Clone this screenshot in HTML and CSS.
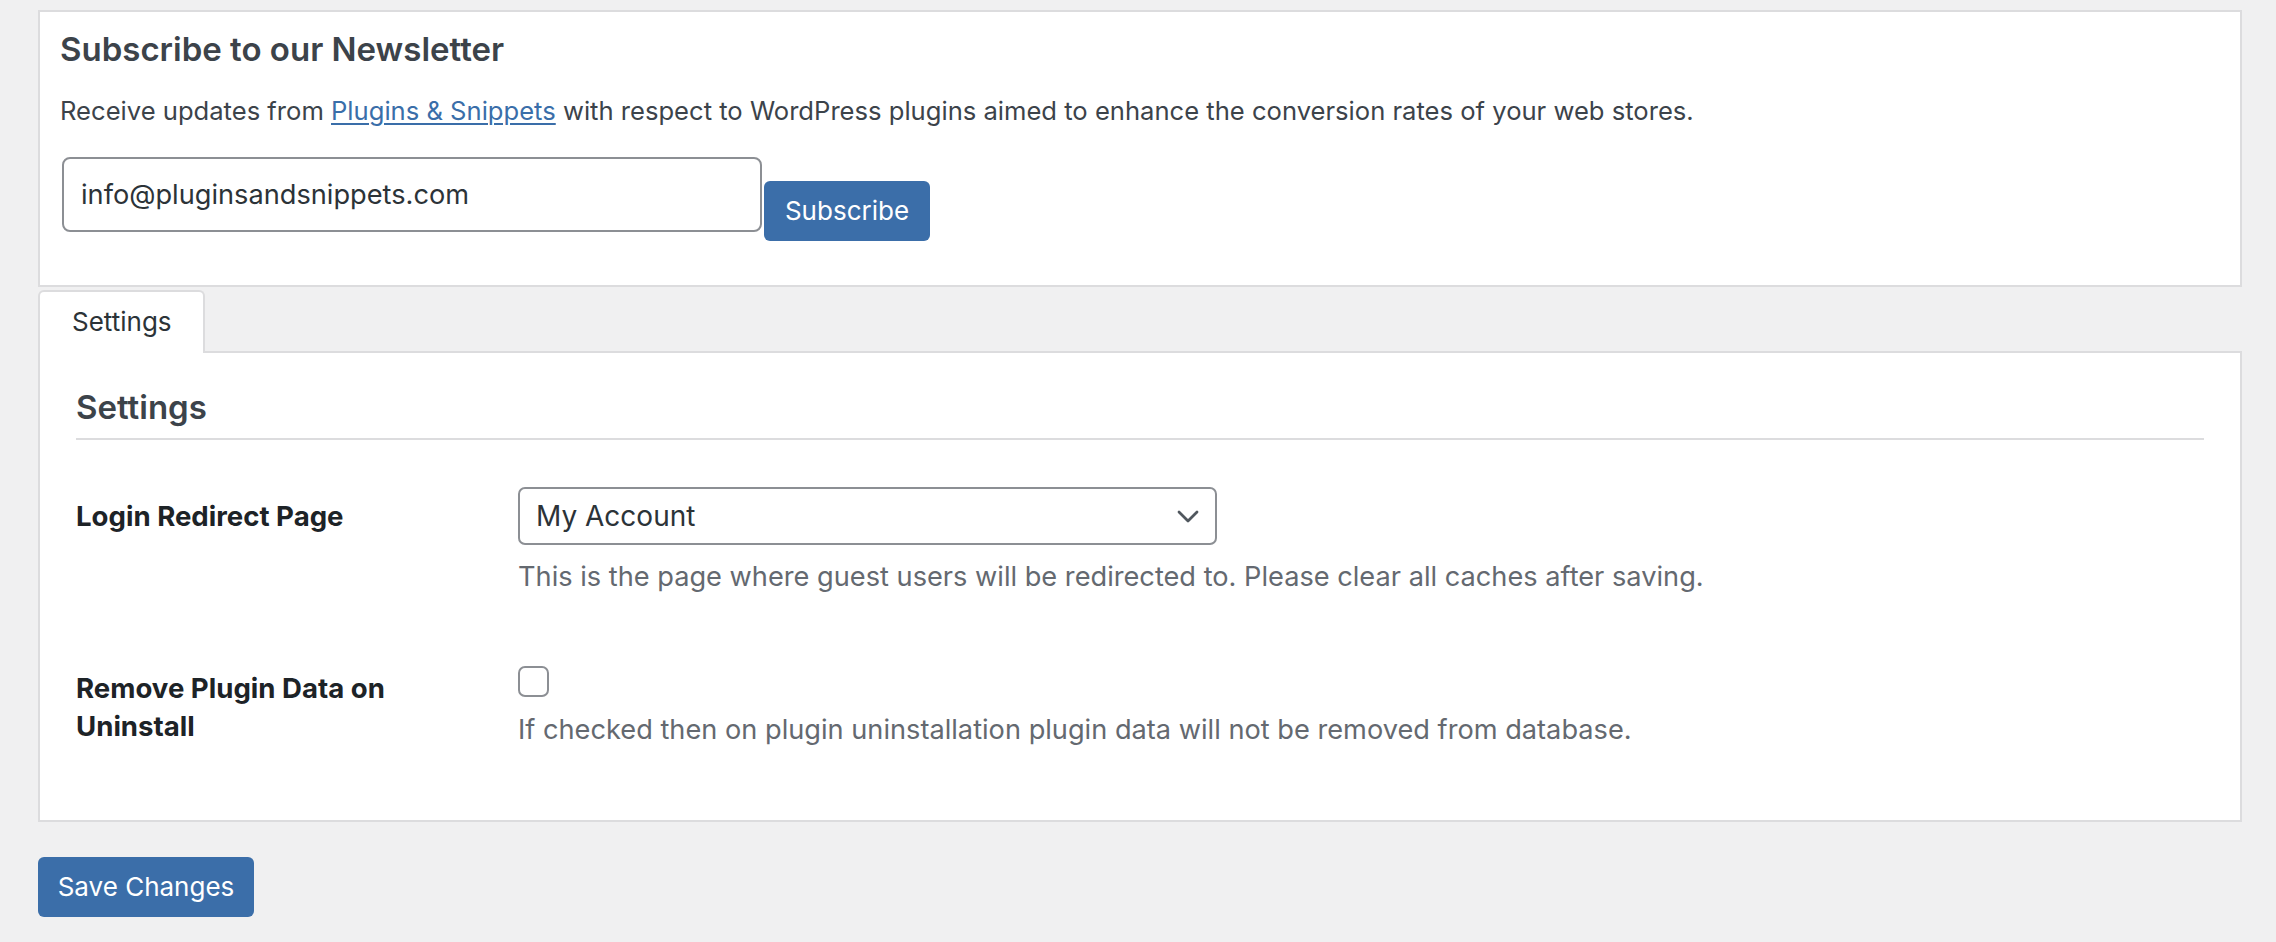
FILE: index.html
```html
<!DOCTYPE html>
<html lang="en">
<head>
<meta charset="utf-8">
<title>Settings</title>
<link rel="stylesheet" href="styles.css">
</head>
<body>
<div class="wrap">
  <section class="card newsletter">
    <h2 class="card-title">Subscribe to our Newsletter</h2>
    <p class="lead">Receive updates from <a href="#" class="link">Plugins &amp; Snippets</a> with respect to WordPress plugins aimed to enhance the conversion rates of your web stores.</p>
    <form class="subscribe">
      <input class="email" type="text" value="info@pluginsandsnippets.com">
      <button type="button" class="btn btn-subscribe">Subscribe</button>
    </form>
  </section>

  <nav class="tabs">
    <span class="tab active">Settings</span>
  </nav>

  <section class="card settings">
    <h2 class="section-title">Settings</h2>

    <div class="row row-redirect">
      <div class="label">Login Redirect Page</div>
      <div class="field">
        <div class="select">
          <span class="select-value">My Account</span>
          <svg class="chevron" width="22" height="13" viewBox="0 0 22 13" aria-hidden="true"><polyline points="2,2 11,11 20,2" fill="none" stroke="#50575e" stroke-width="2.8" stroke-linecap="round" stroke-linejoin="round"/></svg>
        </div>
        <p class="description">This is the page where guest users will be redirected to. Please clear all caches after saving.</p>
      </div>
    </div>

    <div class="row row-remove">
      <div class="label">Remove Plugin Data on<br>Uninstall</div>
      <div class="field">
        <input type="checkbox" class="checkbox">
        <p class="description desc-check">If checked then on plugin uninstallation plugin data will not be removed from database.</p>
      </div>
    </div>
  </section>

  <button type="button" class="btn btn-save">Save Changes</button>
</div>
</body>
</html>
```

FILE: styles.css
```css
* { box-sizing: border-box; }

html, body {
  margin: 0;
  padding: 0;
  background: #f0f0f1;
  font-family: "Inter", "Noto Sans", sans-serif;
  color: #3c434a;
}

.wrap {
  padding: 10px 34px 0 38px;
}

.card {
  background: #fff;
  border: 2px solid #dcdcde;
}

/* Newsletter */
.newsletter {
  padding: 15px 20px 44px 20px;
}

.card-title {
  margin: 0;
  font-size: 33px;
  line-height: 44px;
  font-weight: 600;
  color: #3c434a;
}

.lead {
  margin: 22px 0 0 0;
  font-size: 25.6px;
  line-height: 36px;
  color: #3c434a;
}

.link {
  color: #3a6ea9;
  text-decoration: underline;
  text-underline-offset: 3px;
  text-decoration-thickness: 2px;
}

.subscribe {
  margin: 28px 0 0 2px;
  display: flex;
  align-items: flex-start;
  gap: 2px;
}

.email {
  width: 700px;
  height: 75px;
  margin: 0;
  padding: 0 17px;
  border: 2px solid #8c8f94;
  border-radius: 8px;
  font-family: "Inter", "Noto Sans", sans-serif;
  font-size: 27.2px;
  color: #2c3338;
  background: #fff;
  outline: none;
}

.btn {
  display: inline-flex;
  align-items: center;
  justify-content: center;
  height: 60px;
  padding: 0;
  border: none;
  border-radius: 6px;
  background: #3b6ea9;
  color: #fff;
  font-family: "Inter", "Noto Sans", sans-serif;
  font-size: 26px;
  line-height: 1;
  white-space: nowrap;
  cursor: pointer;
}

.btn-subscribe {
  margin-top: 24px;
  width: 166px;
}

.btn-save {
  margin-top: 35px;
  width: 216px;
}

/* Tabs */
.tabs {
  margin-top: 3px;
  display: flex;
  position: relative;
  z-index: 1;
  margin-bottom: -2px;
}

.tab {
  display: block;
  padding: 12px 32px 13px 32px;
  font-size: 26px;
  line-height: 36px;
  color: #2c3338;
  background: #fff;
  border: 2px solid #dcdcde;
  border-bottom: none;
  border-radius: 6px 6px 0 0;
  width: 167px;
}

/* Settings */
.settings {
  padding: 32px 36px 71px 36px;
}

.section-title {
  margin: 0;
  font-size: 33px;
  line-height: 44px;
  font-weight: 600;
  color: #3c434a;
  padding-bottom: 9px;
  border-bottom: 2px solid #dcdcde;
}

.row {
  display: grid;
  grid-template-columns: 442px 1fr;
  align-items: start;
}

.row-redirect { padding-top: 47px; }
.row-remove { padding-top: 70px; }

.label {
  font-size: 27.6px;
  line-height: 38.4px;
  font-weight: 700;
  color: #1d2327;
}

.row-redirect .label { padding-top: 10px; }
.row-remove .label { padding-top: 3px; }

.select {
  width: 699px;
  height: 58px;
  border: 2px solid #8c8f94;
  border-radius: 7px;
  padding: 0 16px 0 16px;
  display: flex;
  align-items: center;
  justify-content: space-between;
  font-size: 28px;
  color: #2c3338;
  background: #fff;
}

.chevron { display: block; }

.description {
  margin: 12px 0 0 0;
  font-size: 27.2px;
  line-height: 39px;
  color: #646970;
}

.desc-check { margin-top: 13px; }

.checkbox {
  appearance: none;
  -webkit-appearance: none;
  display: block;
  margin: 0;
  width: 31px;
  height: 31px;
  border: 2px solid #8c8f94;
  border-radius: 7px;
  background: #fff;
}
```
